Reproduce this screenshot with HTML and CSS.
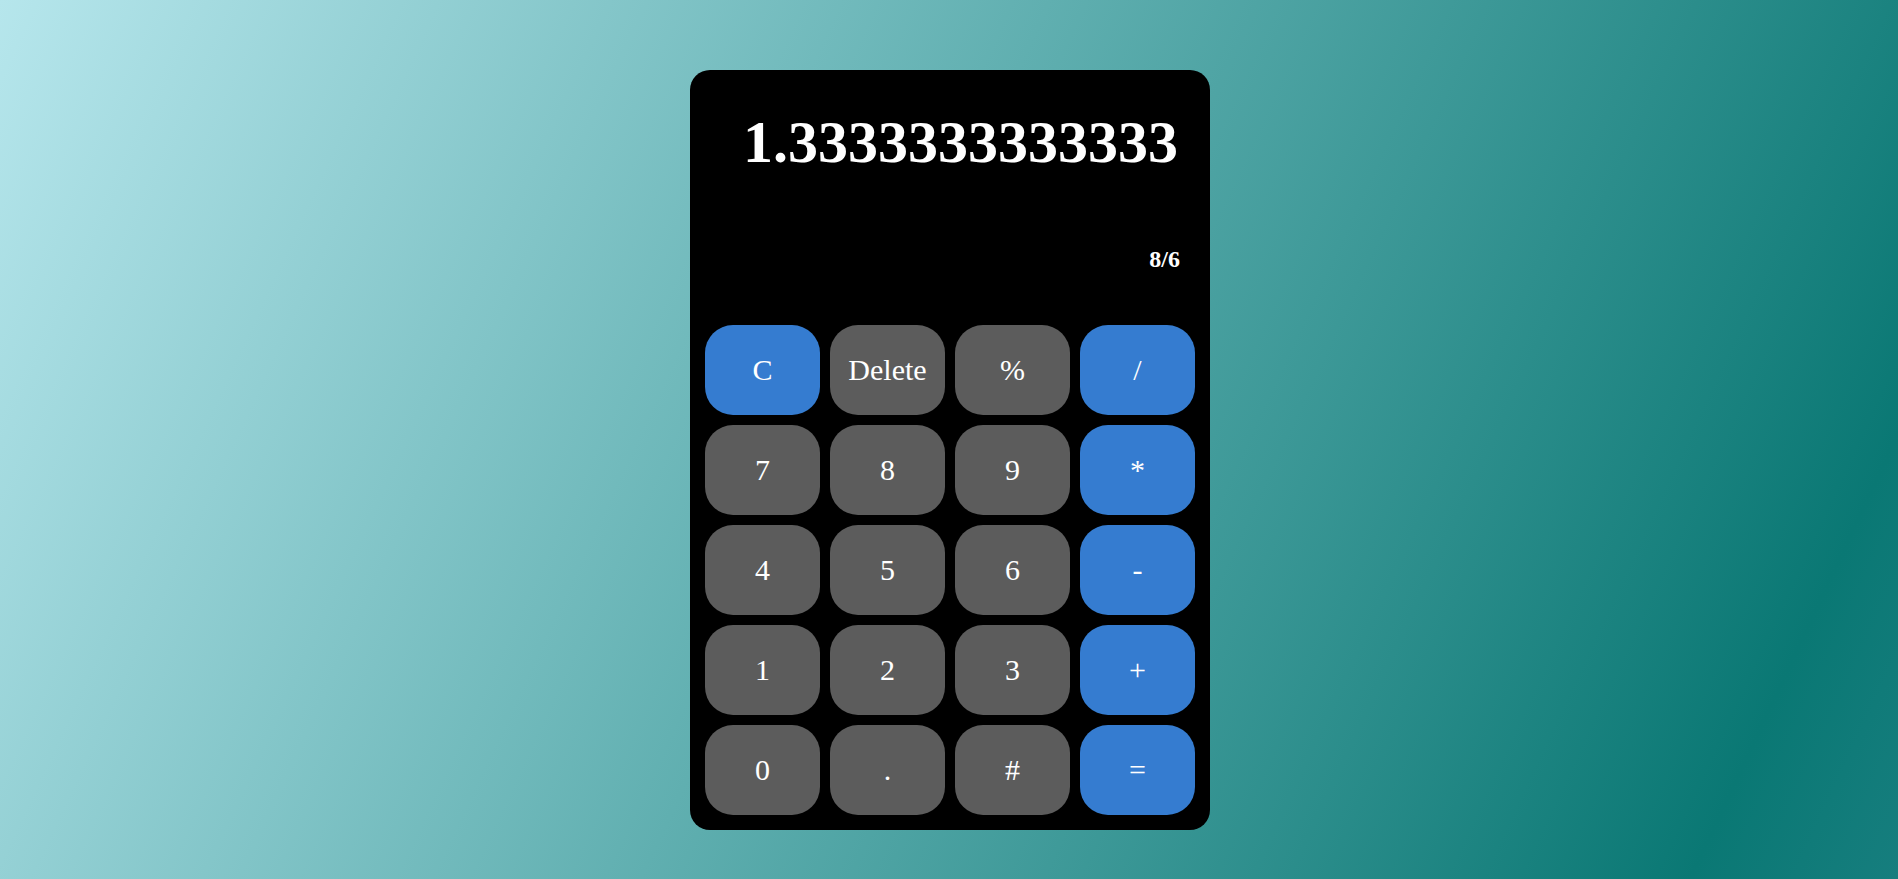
FILE: index.html
```html
<!DOCTYPE html>
<html lang="en">
<head>
<meta charset="utf-8">
<title>Calculator</title>
<link rel="stylesheet" href="styles.css">
</head>
<body>
  <div class="calculator">
    <div class="display">
      <div class="result">1.3333333333333</div>
      <div class="expression">8/6</div>
    </div>
    <div class="keys">
      <button class="key accent">C</button>
      <button class="key">Delete</button>
      <button class="key">%</button>
      <button class="key accent">/</button>
      <button class="key">7</button>
      <button class="key">8</button>
      <button class="key">9</button>
      <button class="key accent">*</button>
      <button class="key">4</button>
      <button class="key">5</button>
      <button class="key">6</button>
      <button class="key accent">-</button>
      <button class="key">1</button>
      <button class="key">2</button>
      <button class="key">3</button>
      <button class="key accent">+</button>
      <button class="key">0</button>
      <button class="key">.</button>
      <button class="key">#</button>
      <button class="key accent">=</button>
    </div>
  </div>
</body>
</html>
```
FILE: styles.css
```css
html, body {
  margin: 0;
  height: 100%;
}
body {
  background: linear-gradient(115deg, #b6e6ec 0%, #0a7874 91%, #167e7e 100%);
  display: flex;
  justify-content: center;
  align-items: flex-start;
  padding-top: 70px;
  padding-left: 2px;
  box-sizing: border-box;
  font-family: "Liberation Serif", "Times New Roman", serif;
  overflow: hidden;
}
.calculator {
  width: 520px;
  height: 760px;
  box-sizing: border-box;
  background: #000;
  border-radius: 20px;
  padding: 15px;
  display: flex;
  flex-direction: column;
}
.display {
  height: 240px;
  box-sizing: border-box;
  padding-top: 27px;
  display: flex;
  flex-direction: column;
  align-items: flex-end;
  color: #fff;
  font-weight: bold;
}
.result {
  font-size: 60px;
  line-height: 60px;
  padding-right: 17px;
}
.expression {
  font-size: 24px;
  line-height: 24px;
  margin-top: 75px;
  padding-right: 15px;
}
.keys {
  display: grid;
  grid-template-columns: repeat(4, 115px);
  grid-auto-rows: 90px;
  gap: 10px;
}
.key {
  border: none;
  border-radius: 28px;
  background: #5c5c5c;
  color: #fff;
  font-family: "Liberation Serif", "Times New Roman", serif;
  font-size: 30px;
  padding: 0;
  margin: 0;
}
.key.accent {
  background: #357cd0;
}
```
